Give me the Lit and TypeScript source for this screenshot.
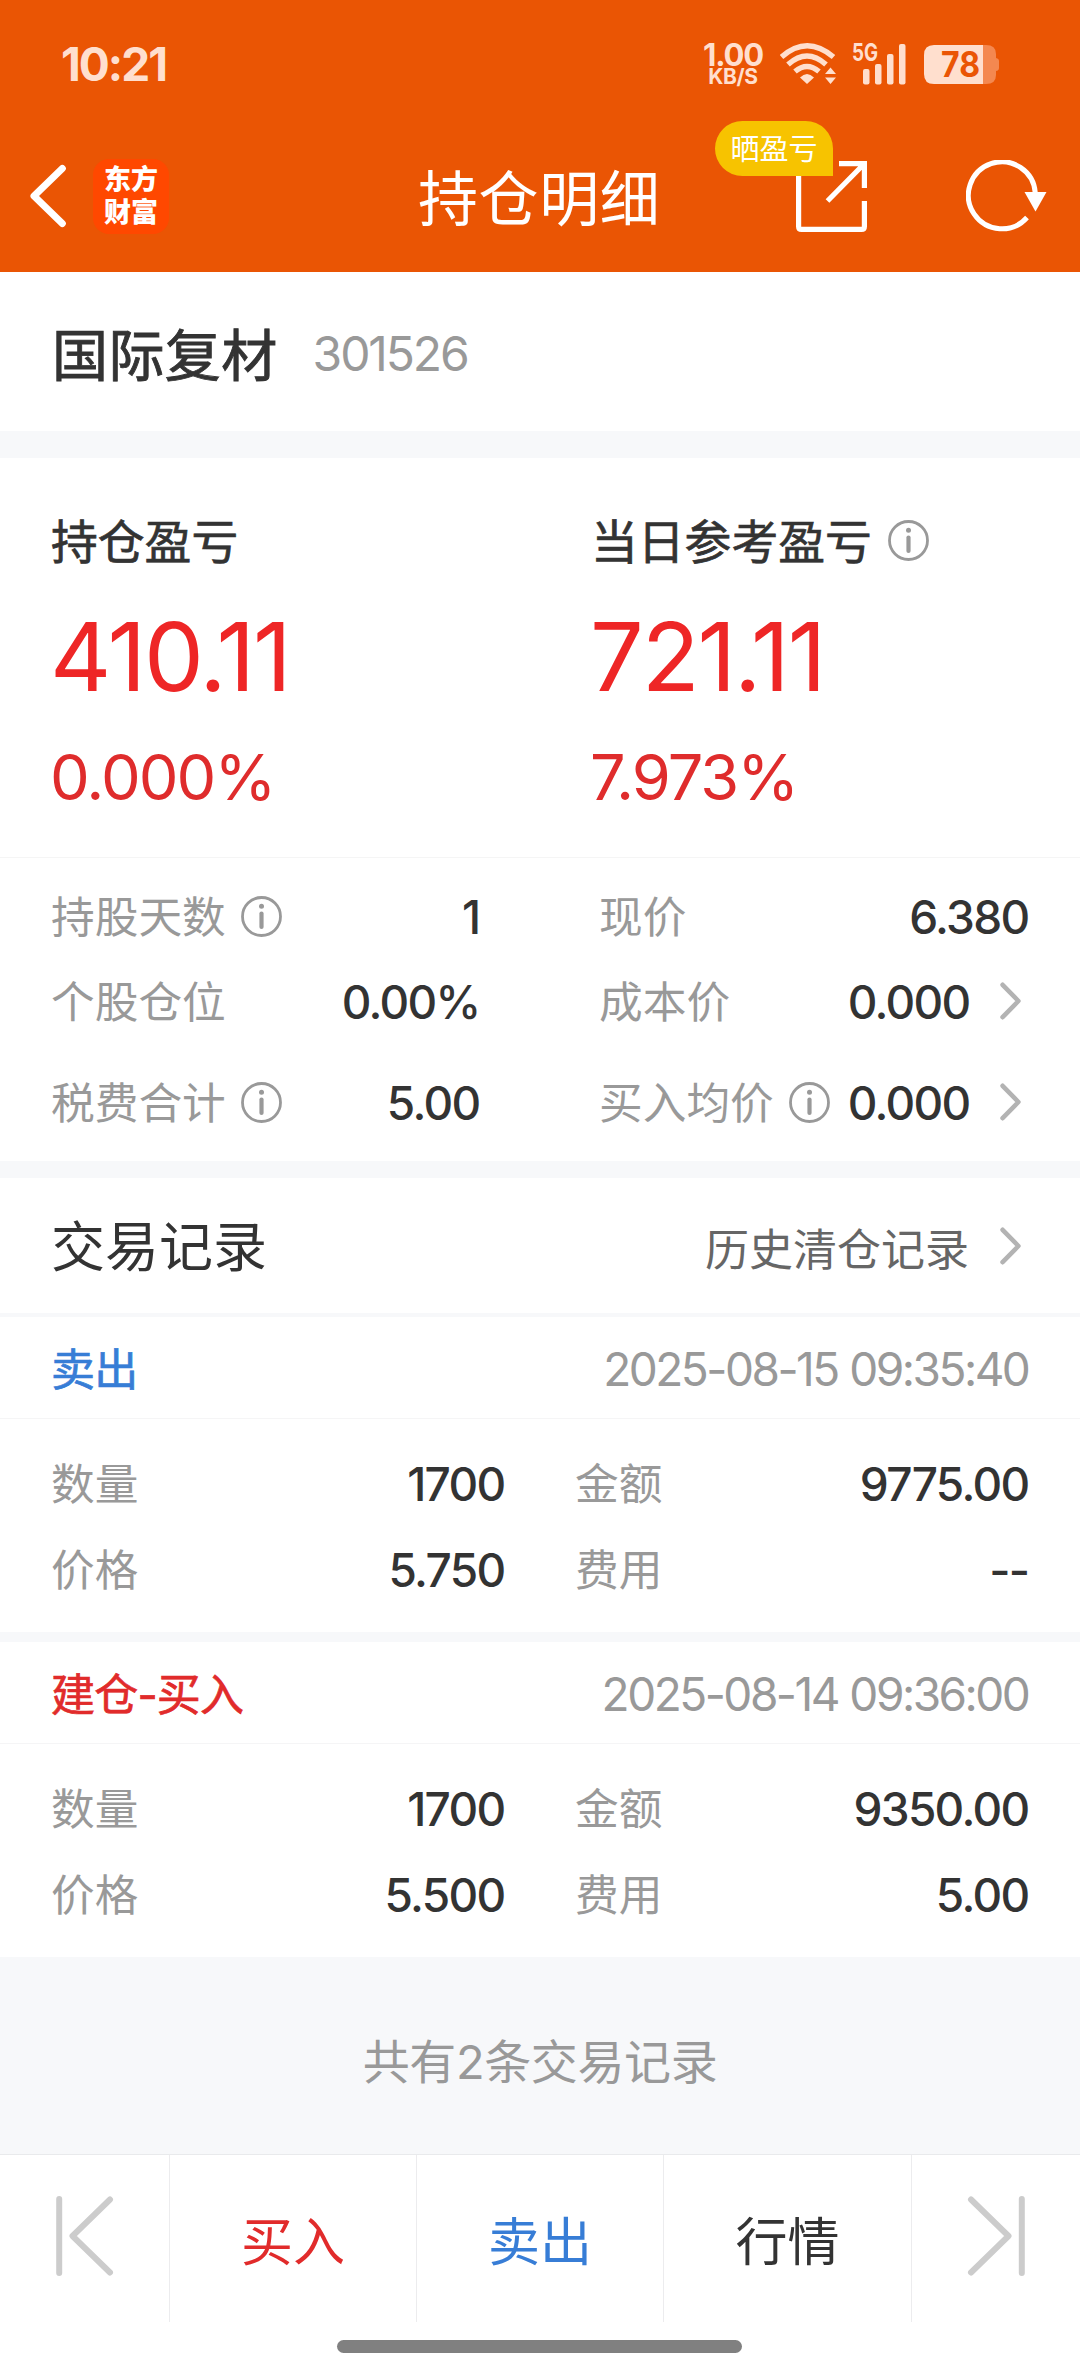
import { LitElement, html, css, nothing } from "lit";
import { customElement, property } from "lit/decorators.js";

interface Cell {
  label: string;
  value: string;
  info?: boolean;
  link?: boolean;
}

interface TradeRecord {
  kind: "sell" | "buy";
  title: string;
  time: string;
  cells: Cell[];
}

const cells: Cell[] = [
  { label: "持股天数", value: "1", info: true },
  { label: "现价", value: "6.380" },
  { label: "个股仓位", value: "0.00%" },
  { label: "成本价", value: "0.000", link: true },
  { label: "税费合计", value: "5.00", info: true },
  { label: "买入均价", value: "0.000", info: true, link: true },
];

const records: TradeRecord[] = [
  {
    kind: "sell",
    title: "卖出",
    time: "2025-08-15 09:35:40",
    cells: [
      { label: "数量", value: "1700" },
      { label: "金额", value: "9775.00" },
      { label: "价格", value: "5.750" },
      { label: "费用", value: "--" },
    ],
  },
  {
    kind: "buy",
    title: "建仓-买入",
    time: "2025-08-14 09:36:00",
    cells: [
      { label: "数量", value: "1700" },
      { label: "金额", value: "9350.00" },
      { label: "价格", value: "5.500" },
      { label: "费用", value: "5.00" },
    ],
  },
];

const infoIcon = html`<svg class="info" width="41" height="41" viewBox="0 0 41 41">
  <circle cx="20.5" cy="20.5" r="19" fill="none" stroke="#999" stroke-width="2.8" />
  <circle cx="20.5" cy="10.2" r="2.5" fill="#999" />
  <path d="M20.5 17.5V31" stroke="#999" stroke-width="4.2" stroke-linecap="round" />
</svg>`;

const chevron = html`<svg class="chev" width="21" height="38" viewBox="0 0 21 38">
  <path d="M2.6 2.8 18.4 19 2.6 35.2" fill="none" stroke="#b3b3b3" stroke-width="4.6" stroke-linecap="round" stroke-linejoin="round" />
</svg>`;

@customElement("status-bar")
export class StatusBar extends LitElement {
  static styles = css`
    :host { display: flex; align-items: flex-start; height: 124px; color: #ffdfce; font-weight: 700; }
    .time { margin: 39px auto 0 61px; font-size: 46px; line-height: 50px; letter-spacing: -2px; }
    .speed { margin: 41px 17px 0 0; width: 60px; display: flex; flex-direction: column; align-items: center; }
    .rate { font-size: 31px; line-height: 27px; letter-spacing: -1.2px; white-space: nowrap; }
    .unit { font-size: 21px; line-height: 17px; letter-spacing: -0.4px; }
    .icons { margin-right: 78px; }
    text { font-weight: 700; }
  `;
  render() {
    return html`
      <div class="time">10:21</div>
      <div class="speed"><span class="rate">1.00</span><span class="unit">KB/S</span></div>
      <svg class="icons" width="222" height="92" viewBox="780 0 222 92">
        <g fill="none" stroke="#ffdfce" stroke-width="5.4">
          <path d="M781.5 57Q807 34.5 833.5 57" />
          <path d="M788 64.5Q807 47.5 826 64.5" />
          <path d="M795 71.5Q807 61.5 819 71.5" />
        </g>
        <path d="M800 77.5Q807 70.5 814 77.5L807 84Z" fill="#ffdfce" />
        <path d="M825 74 830.5 67.5 836 74ZM825 77.5H836L830.5 84Z" fill="#ffdfce" />
        <text x="852" y="60.5" font-size="24" textLength="26" lengthAdjust="spacingAndGlyphs" fill="#ffdfce">5G</text>
        <g fill="#ffdfce">
          <rect x="863" y="69" width="6.5" height="15.5" rx="2" />
          <rect x="875" y="64" width="6.5" height="20.5" rx="2" />
          <rect x="887" y="54" width="6.5" height="30.5" rx="2" />
          <rect x="899" y="44" width="6.5" height="40.5" rx="2" />
        </g>
        <path d="M983 45H986Q996 45 996 54V58Q999 58.5 999 61V68Q999 70.5 996 71V75Q996 84 986 84H983Z" fill="#f48850" />
        <path d="M983 45H934Q924 45 924 55V74Q924 84 934 84H983Z" fill="#ffdfce" />
        <text x="941" y="77" font-size="35" textLength="39" lengthAdjust="spacingAndGlyphs" fill="#ea5504">78</text>
      </svg>
    `;
  }
}

@customElement("nav-bar")
export class NavBar extends LitElement {
  static styles = css`
    :host { display: flex; align-items: center; height: 144px; color: #fff; }
    .back { margin-left: 28px; }
    .logo { margin-left: 26px; width: 76px; height: 75px; box-sizing: border-box; border-radius: 16px; background: #ff4800;
      display: flex; flex-direction: column; align-items: center; justify-content: center;
      font-size: 27px; line-height: 33px; font-weight: 900; }
    .title { margin: 6px 0 0 249px; font-size: 60px; line-height: 80px; letter-spacing: 0.6px; }
    .share { margin-left: auto; position: relative; display: flex; margin-right: 99px; }
    .badge { position: absolute; left: -81px; top: -40px; width: 118px; height: 55px; border-radius: 28px 28px 0 28px;
      background: #f7c300; font-size: 29px; line-height: 57px; text-align: center; white-space: nowrap; }
    .refresh { margin-right: 31px; }
  `;
  render() {
    return html`
      <svg class="back" width="39" height="64" viewBox="0 0 39 64">
        <path d="M34.3 4.5 6 32 34.3 59.5" fill="none" stroke="#fff" stroke-width="7" stroke-linecap="round" stroke-linejoin="round" />
      </svg>
      <div class="logo"><span>东方</span><span>财富</span></div>
      <div class="title">持仓明细</div>
      <div class="share">
        <svg width="71" height="71" viewBox="0 0 71 71">
          <g fill="none" stroke="#fff" stroke-width="5.2">
            <path d="M2.6 8V65.5Q2.6 68.4 5.5 68.4H65.5Q68.4 68.4 68.4 65.5V40" />
            <path d="M43 2.6H68.4V27M67 4 31.5 40" />
          </g>
        </svg>
        <div class="badge">晒盈亏</div>
      </div>
      <svg class="refresh" width="83" height="72" viewBox="0 0 83 72">
        <path d="M69.3 33A33.5 33.5 0 1 0 61 57.5" fill="none" stroke="#fff" stroke-width="5" />
        <path d="M58.5 32H80.500L69.500 51.500Z" fill="#fff" />
      </svg>
    `;
  }
}

@customElement("data-cell")
export class DataCell extends LitElement {
  @property({ attribute: false }) cell!: Cell;
  static styles = css`
    :host { display: flex; align-items: center; min-width: 0; font-size: 43.7px; line-height: 60px; white-space: nowrap; }
    .label { color: #999; margin-left: -1px; }
    .info { margin-left: 15px; margin-top: -3px; }
    .value { margin-left: auto; color: #333; font-size: 46px; font-weight: 500; letter-spacing: -1.7px; margin-right: -0.4px; margin-top: -2px; }
    .chev { margin: -4px 7px 0 31px; }
  `;
  render() {
    const c = this.cell;
    return html`<span class="label">${c.label}</span>${c.info ? infoIcon : nothing}
      <span class="value">${c.value}</span>${c.link ? chevron : nothing}`;
  }
}

@customElement("trade-record")
export class TradeRecordView extends LitElement {
  @property({ attribute: false }) record!: TradeRecord;
  static styles = css`
    :host { display: block; background: #fff; }
    .head { display: flex; align-items: center; justify-content: space-between; height: 102px; padding: 4px 52px 0;
      box-sizing: border-box; border-bottom: 1px solid #f5f5f6; font-size: 44px; line-height: 60px; }
    .kind { -webkit-text-stroke: 0.7px currentColor; letter-spacing: -0.8px; margin-left: -1px; }
    .sell { color: #377dd6; }
    .buy { color: #e12b2b; }
    .time { color: #999; font-size: 46px; letter-spacing: -2.5px; word-spacing: 1px; margin-right: -0.4px; margin-top: -1px; }
    .body { display: grid; grid-template-columns: 452px 452px; column-gap: 72px; grid-auto-rows: 86px; padding: 23px 52px 18px; }
  `;
  render() {
    const r = this.record;
    return html`<div class="head"><span class="kind ${r.kind}">${r.title}</span><span class="time">${r.time}</span></div>
      <div class="body">${r.cells.map((c) => html`<data-cell .cell=${c}></data-cell>`)}</div>`;
  }
}

@customElement("app-root")
export class AppRoot extends LitElement {
  static styles = css`
    :host { display: flex; flex-direction: column; width: 1080px; height: 2376px; background: #fff; overflow: hidden;
      font-family: Inter, "Noto Sans CJK SC", sans-serif; color: #333; }
    .top { background: #ea5504; height: 272px; }
    .band { background: #f7f8fa; flex: none; }
    .b27 { height: 27px; }
    .b17 { height: 17px; }
    .b10 { height: 10px; }
    .b4 { height: 4px; }
    .stock { display: flex; align-items: center; height: 159px; padding: 5px 52px 0; box-sizing: border-box; }
    .name { font-size: 56px; line-height: 80px; -webkit-text-stroke: 0.9px currentColor; margin-top: 3px; letter-spacing: 0.4px; }
    .code { margin-left: 35px; font-size: 48px; color: #999; letter-spacing: -2.1px; margin-top: -1px; }
    .summary { display: grid; grid-template-columns: 540px 1fr; padding: 54px 0 49px 52px; border-bottom: 1px solid #f5f5f5; }
    .col { display: flex; flex-direction: column; }
    .label { display: flex; align-items: center; font-size: 46.8px; line-height: 62px; height: 60px; -webkit-text-stroke: 0.7px currentColor; margin-left: -1px; }
    .label .info { margin-left: 16px; margin-top: -3px; }
    .profit { margin: 39px 0 0 -2px; font-size: 95px; line-height: 92px; height: 90px; color: #ee2626; letter-spacing: -2.1px; }
    .rate { margin: 46px 0 0 -2px; font-size: 63px; line-height: 61px; color: #df2c2c; letter-spacing: -1.9px; }
    .details { display: grid; grid-template-columns: 427px 428px; column-gap: 121px; grid-template-rows: 84px 86px 115px;
      padding: 18px 52px 0; }
    .rechead { display: flex; align-items: center; height: 135px; padding: 0 52px; }
    .rectitle { font-size: 54px; line-height: 80px; margin: 5px 0 0 -1px; }
    .history { margin: 8px 1px 0 auto; font-size: 44px; line-height: 60px; color: #666; }
    .rechead .chev { margin: 1px 7px 0 30px; }
    .total { flex: none; height: 197px; box-sizing: border-box; padding-top: 5px; background: #f7f8fa; color: #999;
      display: flex; align-items: center; justify-content: center; font-size: 47px; letter-spacing: -0.4px; }
    .actions { display: grid; grid-template-columns: 170px 247px 247px 248px 1fr; height: 168px; border-top: 1px solid #e9eaec; box-sizing: border-box; }
    .action { display: flex; align-items: center; justify-content: center; box-sizing: border-box; border-right: 1px solid #ececee;
      font-size: 52px; }
    .action:last-child { border-right: 0; }
    .nav { padding-bottom: 5px; }
    .buy { color: #e12b2b; }
    .sell { color: #377dd6; }
    .home { width: 405px; height: 13px; border-radius: 7px; background: #808080; margin: 18px 0 0 337px; }
  `;
  render() {
    return html`
      <div class="top"><status-bar></status-bar><nav-bar></nav-bar></div>
      <div class="stock"><span class="name">国际复材</span><span class="code">301526</span></div>
      <div class="band b27"></div>
      <div class="summary">
        <div class="col">
          <div class="label">持仓盈亏</div>
          <div class="profit">410.11</div>
          <div class="rate">0.000%</div>
        </div>
        <div class="col">
          <div class="label">当日参考盈亏${infoIcon}</div>
          <div class="profit">721.11</div>
          <div class="rate">7.973%</div>
        </div>
      </div>
      <div class="details">${cells.map((c) => html`<data-cell .cell=${c}></data-cell>`)}</div>
      <div class="band b17"></div>
      <div class="rechead"><span class="rectitle">交易记录</span><span class="history">历史清仓记录</span>${chevron}</div>
      <div class="band b4"></div>
      ${records.map((r, i) => html`${i ? html`<div class="band b10"></div>` : nothing}<trade-record .record=${r}></trade-record>`)}
      <div class="total">共有2条交易记录</div>
      <div class="actions">
        <div class="action nav"><svg width="58" height="80" viewBox="0 0 58 80">
          <path d="M3.2 3V77M54 3.5 16.5 40 54 76.5" fill="none" stroke="#ccc" stroke-width="6" stroke-linecap="round" stroke-linejoin="round" />
        </svg></div>
        <div class="action buy">买入</div>
        <div class="action sell">卖出</div>
        <div class="action">行情</div>
        <div class="action nav"><svg width="58" height="80" viewBox="0 0 58 80">
          <path d="M54.8 3V77M4 3.5 41.5 40 4 76.5" fill="none" stroke="#ccc" stroke-width="6" stroke-linecap="round" stroke-linejoin="round" />
        </svg></div>
      </div>
      <div class="home"></div>
    `;
  }
}
